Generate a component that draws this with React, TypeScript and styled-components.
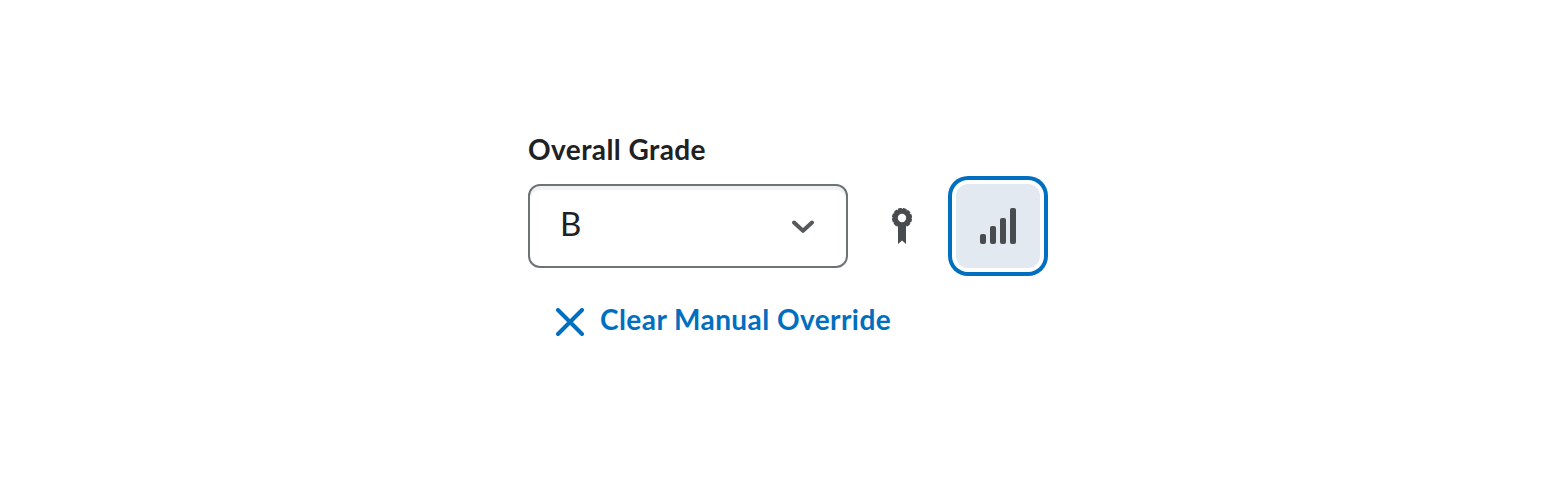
import React from "react";
import styled, { createGlobalStyle } from "styled-components";

const GlobalStyle = createGlobalStyle`
  body { margin: 0; background: #fff; }
  * { box-sizing: border-box; }
`;

const Page = styled.main`
  padding: 131px 0 0 528px;
  height: 484px;
  font-family: Lato, sans-serif;
  color: #202122;
`;

const Label = styled.label`
  display: block;
  height: 36px;
  font-size: 28px;
  font-weight: 700;
  line-height: 36px;
  letter-spacing: 0.42px;
`;

const Row = styled.div`
  display: flex;
  align-items: center;
  margin-top: 9px;
  height: 100px;
`;

const Select = styled.button`
  display: flex;
  align-items: center;
  justify-content: space-between;
  width: 320px;
  height: 84px;
  padding: 0 32px 6px 30px;
  border: 2px solid #6e7376;
  border-radius: 12px;
  background: #fff;
  box-shadow: inset 0 4px 0 0 #f1f2f5;
  font: 400 33px/40px Lato, sans-serif;
  color: #202122;
`;

const Chevron = styled.svg`
  display: block;
  margin-top: 8px;
`;

const Award = styled.svg`
  display: block;
  margin-left: 42px;
`;

const StatsButton = styled.button`
  display: grid;
  place-items: center;
  width: 84px;
  height: 84px;
  margin-left: 42px;
  padding: 0;
  border: 0;
  border-radius: 12px;
  background: #e3e9f1;
  box-shadow: 0 0 0 4px #fff, 0 0 0 8px #006fbf;
`;

const ClearButton = styled.button`
  display: flex;
  align-items: center;
  gap: 16px;
  margin: 25px 0 0 28px;
  padding: 0;
  border: 0;
  background: none;
  color: #006fbf;
  font: 700 28px/36px Lato, sans-serif;
  letter-spacing: 0.44px;
`;

const CloseIcon = styled.svg`
  display: block;
  margin-top: 6px;
`;

export default function App() {
  return (
    <Page>
      <GlobalStyle />
      <Label>Overall Grade</Label>
      <Row>
        <Select>
          B
          <Chevron width="22" height="14" viewBox="0 0 22 14">
            <path d="M2 2.5l9 8.3 9-8.3" fill="none" stroke="#565a5c" strokeWidth="4" strokeLinecap="round" strokeLinejoin="round" />
          </Chevron>
        </Select>
        <Award width="24" height="36" viewBox="0 0 24 36">
          <circle cx="12" cy="10" r="6.75" fill="none" stroke="#494c4e" strokeWidth="5.1" />
          <circle cx="12" cy="10" r="9" fill="none" stroke="#494c4e" strokeWidth="2.2" strokeDasharray="3.7 1.0124" strokeDashoffset="4.206" />
          <path d="M8 18h8v18l-4-3.6L8 36z" fill="#494c4e" />
        </Award>
        <StatsButton>
          <svg width="36" height="36" viewBox="0 0 36 36" fill="#494c4e">
            <rect x="0" y="26" width="6" height="10" rx="2" />
            <rect x="10" y="18" width="6" height="18" rx="2" />
            <rect x="20" y="10" width="6" height="26" rx="2" />
            <rect x="30" y="0" width="6" height="36" rx="2" />
          </svg>
        </StatsButton>
      </Row>
      <ClearButton>
        <CloseIcon width="28" height="28" viewBox="0 0 28 28">
          <path d="M2 2l24 24M26 2L2 26" stroke="#006fbf" strokeWidth="4" strokeLinecap="round" />
        </CloseIcon>
        Clear Manual Override
      </ClearButton>
    </Page>
  );
}
